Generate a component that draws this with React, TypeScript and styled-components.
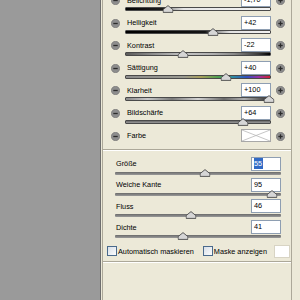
import styled, { createGlobalStyle } from 'styled-components';

const GlobalStyle = createGlobalStyle`
  html, body {
    margin: 0;
    padding: 0;
    background: #9a9a9a;
  }
  body {
    font-family: "Liberation Sans", Arial, sans-serif;
  }
`;

type TrackKind = 'exposure' | 'brightness' | 'contrast' | 'saturation' | 'clarity' | 'plain';

const trackFills: Record<TrackKind, string> = {
  exposure: 'linear-gradient(to right, #050505 0%, #1c1c1c 26%, #9a9a9a 30%, #e6e6e6 40%, #f4f4f4 100%)',
  brightness: 'linear-gradient(to right, #000 0%, #151515 55%, #8a8a8a 62%, #e2e2e2 72%, #f2f2f2 100%)',
  contrast:
    'linear-gradient(to right, #5a5a5a 0%, #8c8c8c 18%, #c4c4c4 40%, #b0b0b0 60%, #8a8a8a 75%, #3a3a3a 92%, #000 100%)',
  saturation:
    'linear-gradient(to right, #8c8c8c 0%, #9a9a90 40%, #a8a05a 52%, #4ea04e 64%, #2e8ca0 74%, #3050c0 84%, #9a30a8 92%, #d02030 100%)',
  clarity:
    'linear-gradient(to right, #8a8a8a 0%, #c8c8c8 15%, #7a7a7a 32%, #d4d4d4 50%, #6a6a6a 68%, #b0b0b0 82%, #2a2a2a 100%)',
  plain: 'linear-gradient(to bottom, #6a6a6a, #9a9a9a)',
};

type Adjustment = { label: string; value: string; pos: number; track: TrackKind };

const adjustments: Adjustment[] = [
  { label: 'Belichtung', value: '-1,70', pos: 29, track: 'exposure' },
  { label: 'Helligkeit', value: '+42', pos: 60.7, track: 'brightness' },
  { label: 'Kontrast', value: '-22', pos: 39.3, track: 'contrast' },
  { label: 'Sättigung', value: '+40', pos: 69.7, track: 'saturation' },
  { label: 'Klarheit', value: '+100', pos: 99.3, track: 'clarity' },
  { label: 'Bildschärfe', value: '+64', pos: 81.4, track: 'plain' },
];

const brushOptions = [
  { label: 'Größe', value: '55', pos: 54.5, selected: true },
  { label: 'Weiche Kante', value: '95', pos: 94.5 },
  { label: 'Fluss', value: '46', pos: 45.5 },
  { label: 'Dichte', value: '41', pos: 41 },
];

const Page = styled.div`
  display: flex;
  width: 300px;
  height: 300px;
  overflow: hidden;
  font-size: 7.3px;
  color: #000;
`;

const Backdrop = styled.div`
  flex: none;
  width: 100px;
  background: #9a9a9a;
`;

const Panel = styled.div`
  flex: none;
  width: 200px;
  box-sizing: border-box;
  display: flex;
  flex-direction: column;
  background: #ece9d8;
  border-left: 1px solid #6e6e6e;
  padding: 0 8px 0 1px;
`;

const Group = styled.div`
  flex: 1;
  display: flex;
  flex-direction: column;
  border-left: 1px solid #aca899;
  border-right: 1px solid #aca899;
`;

const AdjustList = styled.div`
  margin-top: -7px;
  padding: 0 6px 6px 8px;
`;

const AdjustRow = styled.div<{ $short?: boolean }>`
  display: grid;
  grid-template-columns: 9px 1fr 9px;
  column-gap: 5px;
  height: ${({ $short }) => ($short ? '14px' : '22.6px')};
`;

const RowBody = styled.div`
  display: flex;
  flex-direction: column;
`;

const RowHeader = styled.div<{ $indent: number }>`
  display: flex;
  align-items: center;
  justify-content: space-between;
  height: 14px;
  padding-left: ${({ $indent }) => $indent}px;
`;

const Label = styled.span`
  white-space: nowrap;
`;

const ValueBox = styled.div`
  width: 30px;
  height: 14px;
  box-sizing: border-box;
  border: 1px solid #8e9eb2;
  background: #fff;
  padding-left: 2px;
  line-height: 12px;
  white-space: nowrap;
`;

const Selection = styled.span`
  background: #316ac5;
  color: #fff;
  padding: 1px 1px 1px 0;
`;

const Swatch = styled.div`
  width: 30px;
  height: 13px;
  box-sizing: border-box;
  border: 1px solid #a8a8a8;
  background: #fff;
  display: flex;
`;

const StepButton = styled.div`
  margin-top: 3px;
  width: 9px;
  height: 9px;
  display: flex;
`;

const Track = styled.div<{ $fill: string; $upper?: boolean }>`
  position: relative;
  height: ${({ $upper }) => ($upper ? '4px' : '3px')};
  margin-top: ${({ $upper }) => ($upper ? '0' : '1px')};
  box-sizing: border-box;
  border: ${({ $upper }) => ($upper ? '1px solid #4a4a4a' : '0')};
  border-radius: 1px;
  background: ${({ $fill }) => $fill};
`;

const Thumb = styled.div`
  position: absolute;
  top: -3px;
  width: 11px;
  height: 8px;
  transform: translateX(-50%);
  display: flex;
`;

const Divider = styled.div`
  height: 0;
  border-top: 1px solid #aca899;
  border-bottom: 1px solid #fff;
`;

const BrushList = styled.div`
  padding: 6px 10px 0 12px;
`;

const BrushRow = styled.div`
  display: flex;
  flex-direction: column;
  height: 21.3px;
`;

const CheckRow = styled.div`
  display: flex;
  align-items: center;
  height: 19px;
  padding: 0 1px 0 4px;
`;

const CheckItem = styled.label<{ $gap: number }>`
  display: flex;
  align-items: center;
  gap: 1px;
  margin-left: ${({ $gap }) => $gap}px;
  white-space: nowrap;
`;

const CheckBox = styled.span`
  width: 10px;
  height: 10px;
  box-sizing: border-box;
  border: 1px solid #4a6a8c;
  background: linear-gradient(135deg, #d8dfe8, #fbfcfd);
`;

const ColorWell = styled.div`
  margin-left: auto;
  width: 16px;
  height: 13px;
  box-sizing: border-box;
  border: 1px solid #d8d4c4;
  background: #fff;
`;

function StepIcon({ plus }: { plus?: boolean }) {
  return (
    <svg width="9" height="9" viewBox="0 0 9 9">
      <circle cx="4.5" cy="4.5" r="4.2" fill="#8d8d8d" stroke="#727272" strokeWidth="0.6" />
      <path d="M2.3 4.5 H6.7" stroke="#2c2c2c" strokeWidth="1.3" />
      {plus && <path d="M4.5 2.3 V6.7" stroke="#2c2c2c" strokeWidth="1.3" />}
    </svg>
  );
}

function ThumbIcon() {
  return (
    <svg width="11" height="8" viewBox="0 0 11 8">
      <path d="M5.5 0.6 L10.4 4.6 L10.4 7.4 L0.6 7.4 L0.6 4.6 Z" fill="#d6d6d6" stroke="#4a4a4a" strokeWidth="0.9" />
    </svg>
  );
}

function Slider({ pos, fill, upper }: { pos: number; fill: string; upper?: boolean }) {
  return (
    <Track $fill={fill} $upper={upper}>
      <Thumb style={{ left: `${pos}%` }}>
        <ThumbIcon />
      </Thumb>
    </Track>
  );
}

export default function App() {
  return (
    <>
      <GlobalStyle />
      <Page>
        <Backdrop />
        <Panel>
          <Group>
            <AdjustList>
              {adjustments.map((adj) => (
                <AdjustRow key={adj.label}>
                  <StepButton>
                    <StepIcon />
                  </StepButton>
                  <RowBody>
                    <RowHeader $indent={2}>
                      <Label>{adj.label}</Label>
                      <ValueBox>{adj.value}</ValueBox>
                    </RowHeader>
                    <Slider pos={adj.pos} fill={trackFills[adj.track]} upper />
                  </RowBody>
                  <StepButton>
                    <StepIcon plus />
                  </StepButton>
                </AdjustRow>
              ))}
              <AdjustRow $short>
                <StepButton>
                  <StepIcon />
                </StepButton>
                <RowHeader $indent={2}>
                  <Label>Farbe</Label>
                  <Swatch>
                    <svg width="28" height="11" viewBox="0 0 28 11">
                      <path d="M0 0 L28 11 M28 0 L0 11" stroke="#b8b8b8" strokeWidth="0.8" />
                    </svg>
                  </Swatch>
                </RowHeader>
                <StepButton>
                  <StepIcon plus />
                </StepButton>
              </AdjustRow>
            </AdjustList>
            <Divider />
            <BrushList>
              {brushOptions.map((opt) => (
                <BrushRow key={opt.label}>
                  <RowHeader $indent={1}>
                    <Label>{opt.label}</Label>
                    <ValueBox>{opt.selected ? <Selection>{opt.value}</Selection> : opt.value}</ValueBox>
                  </RowHeader>
                  <Slider pos={opt.pos} fill={trackFills.plain} />
                </BrushRow>
              ))}
            </BrushList>
            <CheckRow>
              <CheckItem $gap={0}>
                <CheckBox />
                Automatisch maskieren
              </CheckItem>
              <CheckItem $gap={9}>
                <CheckBox />
                Maske anzeigen
              </CheckItem>
              <ColorWell />
            </CheckRow>
            <Divider />
          </Group>
        </Panel>
      </Page>
    </>
  );
}
